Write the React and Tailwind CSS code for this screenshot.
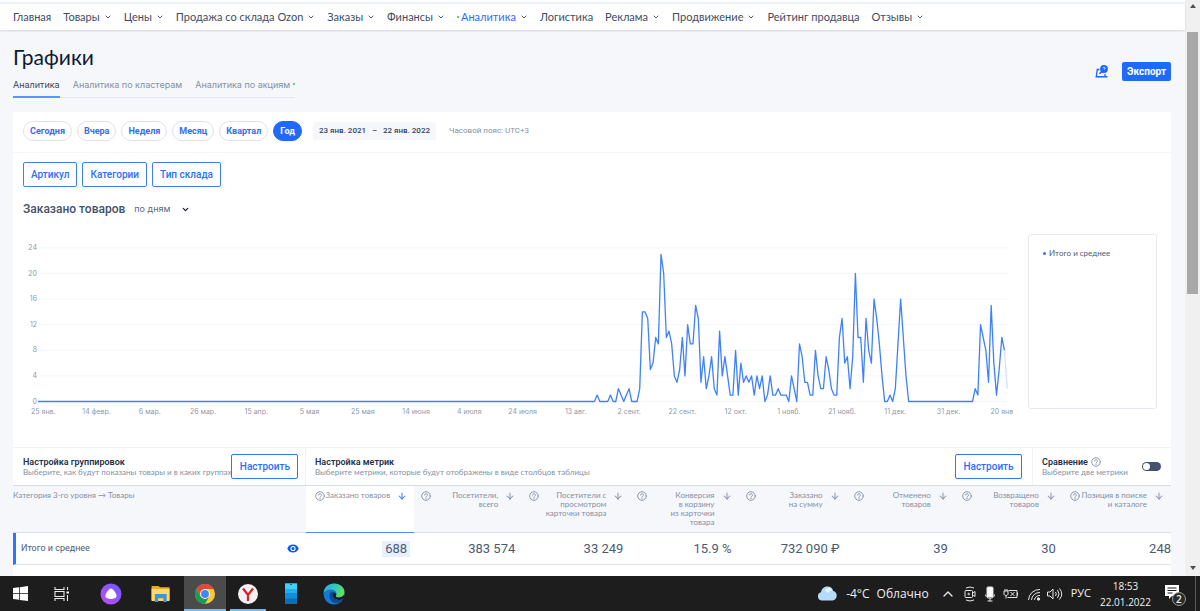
import React from 'react';
import clsx from 'clsx';
import { ArrowDown, ChevronDown, ChevronUp } from 'lucide-react';

const navItems = [
  { label: 'Главная' },
  { label: 'Товары', menu: true },
  { label: 'Цены', menu: true },
  { label: 'Продажа со склада Ozon', menu: true },
  { label: 'Заказы', menu: true },
  { label: 'Финансы', menu: true },
  { label: 'Аналитика', menu: true, active: true },
  { label: 'Логистика' },
  { label: 'Реклама', menu: true },
  { label: 'Продвижение', menu: true },
  { label: 'Рейтинг продавца' },
  { label: 'Отзывы', menu: true },
];

const periods = ['Сегодня', 'Вчера', 'Неделя', 'Месяц', 'Квартал', 'Год'];
const filters = ['Артикул', 'Категории', 'Тип склада'];

const metrics = [
  { lines: ['Заказано товаров'], value: '688', sorted: true },
  { lines: ['Посетители,', 'всего'], value: '383 574' },
  { lines: ['Посетители с', 'просмотром', 'карточки товара'], value: '33 249' },
  { lines: ['Конверсия', 'в корзину', 'из карточки', 'товара'], value: '15.9 %' },
  { lines: ['Заказано', 'на сумму'], value: '732 090 ₽' },
  { lines: ['Отменено', 'товаров'], value: '39' },
  { lines: ['Возвращено', 'товаров'], value: '30' },
  { lines: ['Позиция в поиске', 'и каталоге'], value: '248' },
];

// Orders per day, 23 Jan 2021 - 22 Jan 2022
const orders = [
  ...Array(209).fill(0),
  0, 1, 0, 0, 0, 0, 1, 0, 0, 2, 1, 0, 1, 2, 0, 0, 0, 2, 14, 14, 13, 5, 6, 10, 9, 23, 20, 10, 11, 9,
  4, 3, 5, 10, 4, 12, 9, 9, 15, 13, 3, 7, 2, 4, 7, 2, 1, 11, 4, 7, 4, 1, 1, 8, 1, 6, 3, 4, 3, 4,
  1, 4, 2, 4, 0, 1, 4, 1, 1, 2, 1, 1, 1, 0, 4, 2, 0, 9, 7, 3, 3, 1, 1, 8, 4, 2, 2, 7, 5, 2,
  1, 1, 10, 13, 6, 7, 2, 7, 20, 10, 10, 3, 13, 8, 6, 16, 13, 9, 4, 0, 0, 1, 0, 2, 9, 16, 10, 4,
  ...Array(25).fill(0),
  2, 1, 12, 10, 8, 3, 15, 6, 1, 5, 10, 8, 2,
];

const dateTicks = [
  '25 янв.', '14 февр.', '6 мар.', '26 мар.', '15 апр.', '5 мая', '25 мая', '14 июня', '4 июля', '24 июля',
  '13 авг.', '2 сент.', '22 сент.', '12 окт.', '1 нояб.', '21 нояб.', '11 дек.', '31 дек.', '20 янв',
];

const chartX = (day) => 15 + day * 2.6625;
const chartY = (value) => 167.5 - value * 6.4;
const toPoints = (from, to) =>
  orders.slice(from, to).map((v, i) => `${chartX(from + i)},${chartY(v)}`).join(' ');

const HelpIcon = ({ className }) => (
  <svg viewBox="0 0 20 20" className={clsx('h-[10px] w-[10px] shrink-0', className)} fill="none" stroke="currentColor" strokeWidth="2" strokeLinecap="round">
    <circle cx="10" cy="10" r="8.6" />
    <path d="M7.2 8.2a2.8 2.8 0 1 1 4.2 2.4c-1 .6-1.4 1-1.4 1.9" />
    <path d="M10 15v.1" strokeWidth="2.4" />
  </svg>
);

const EyeIcon = () => (
  <svg viewBox="0 0 24 18" className="h-[9px] w-[12px]">
    <path d="M12 1C6.5 1 2.4 4.200 .8 9c1.600 4.800 5.700 8 11.200 8s9.600-3.200 11.200-8C21.600 4.200 17.500 1 12 1z" fill="#005bff" />
    <circle cx="12" cy="9" r="5.200" fill="#fff" />
    <circle cx="12" cy="9" r="3" fill="#005bff" />
  </svg>
);

const NavBar = () => (
  <nav className="relative flex h-[26px] items-center gap-[12px] bg-white pl-[13px] font-[Lato,Inter,sans-serif] text-[11px] text-[#3d4d63] shadow-[0_1px_2px_rgba(0,20,60,0.15)]">
    {navItems.map((item) => (
      <a key={item.label} href="#" className={clsx('flex items-center whitespace-nowrap', item.active && 'text-[#2f6bff]')}>
        {item.active && <span className="mr-[2px] h-[2px] w-[2px] rounded-full bg-[#2fbf50]" />}
        {item.label}
        {item.menu && <ChevronDown className="ml-[4px] h-[8px] w-[8px] text-[#4d5c73]" strokeWidth={3} />}
      </a>
    ))}
  </nav>
);

const PageHeader = () => (
  <header className="flex items-start justify-between pt-[14px]">
    <div>
      <h1 className="font-[Lato,Inter,sans-serif] text-[21px] leading-[26px] text-[#0d1a33]">Графики</h1>
      <div className="mt-[8px] flex gap-[13px] border-b border-[#e3e7f3] font-[Inter,sans-serif] text-[9px] leading-[14px] text-[#8590a3]">
        <a href="#" className="-mb-px border-b-2 border-[#5b93ff] pb-[4px] text-[#3a475c]">Аналитика</a>
        <a href="#">Аналитика по кластерам</a>
        <a href="#" className="flex">
          Аналитика по акциям
          <span className="mt-[5px] ml-[3px] h-[2px] w-[2px] rounded-full bg-[#2fbf50]" />
        </a>
      </div>
    </div>
    <div className="mt-[18px] flex items-center gap-[14px]">
      <button type="button" aria-label="Помощь">
        <svg viewBox="0 0 26 26" className="h-[13px] w-[13px]">
          <path d="M9 9H4.500L3 20M1 23.500h24M20 18v5M3 20v3" fill="none" stroke="#1a66ff" strokeWidth="2.600" />
          <path d="M9 18c1-3 3-4 6-4" fill="none" stroke="#1a66ff" strokeWidth="2.600" />
          <circle cx="18" cy="8" r="7.800" fill="#1a66ff" />
          <path d="M16 6.500c0-3 4.500-2.500 4.200 0-.1 1.500-2 1.600-2 3.300" fill="none" stroke="#fff" strokeWidth="1.600" />
        </svg>
      </button>
      <button type="button" className="h-[19px] w-[49px] rounded-[2px] bg-[#1f69ff] text-[10px] leading-none font-bold text-white">Экспорт</button>
    </div>
  </header>
);

const PeriodBar = () => (
  <div className="flex h-[41px] items-center border-b border-[#f3f5fa] pb-[2px] pl-[10px]">
    <div className="flex gap-[5px]">
      {periods.map((p) => (
        <button
          key={p}
          type="button"
          className={clsx(
            'h-[20px] rounded-full border px-[6px] text-[9px] leading-none font-bold',
            p === 'Год' ? 'border-[#1f69ff] bg-[#1f69ff] text-white' : 'border-[#dfe2ec] bg-white text-[#2f6dff]'
          )}
        >
          {p}
        </button>
      ))}
    </div>
    <div className="ml-[11px] flex h-[18px] w-[123px] items-center justify-between rounded-[2px] bg-[#f5f7fb] px-[6px] text-[8px] font-medium text-[#36455c]">
      <input aria-label="Начало периода" className="w-[50px] bg-transparent" defaultValue="23 янв. 2021" />
      <span>–</span>
      <input aria-label="Конец периода" className="w-[50px] bg-transparent text-right" defaultValue="22 янв. 2022" />
    </div>
    <span className="ml-[13px] text-[8px] text-[#8590a3]">Часовой пояс: UTC+3</span>
  </div>
);

const Chart = () => (
  <svg viewBox="0 0 986 186" className="min-w-0 flex-1 overflow-visible font-[Inter,sans-serif]" role="img" aria-label="Заказано товаров по дням">
    {[0, 4, 8, 12, 16, 20, 24].map((v) => (
      <g key={v}>
        <line x1="15" x2="985" y1={chartY(v)} y2={chartY(v)} stroke="#f6f7fa" />
        <text x="14" y={chartY(v) + 2} textAnchor="end" fontSize="7" fill="#8e99ab">{v}</text>
      </g>
    ))}
    {dateTicks.map((label, i) => (
      <text key={label} x={chartX(2 + i * 20)} y="180" textAnchor="middle" fontSize="7" fill="#8e99ab">{label}</text>
    ))}
    <polyline points={toPoints(0, 364)} fill="none" stroke="#3f80ff" strokeWidth="1.300" strokeLinejoin="round" />
    <polyline points={toPoints(363, 365)} fill="none" stroke="#cfe0ff" strokeWidth="1.200" />
  </svg>
);

const ConfigureButton = () => (
  <button type="button" className="h-[25px] w-[67px] shrink-0 rounded-[2px] border border-[#2f74ff] font-[Roboto,sans-serif] text-[10px] font-medium text-[#2f6dff]">
    Настроить
  </button>
);

const SettingsBar = () => (
  <div className="flex h-[38px] border-t border-[#f0f2f7] font-[Lato,sans-serif] text-[8px] leading-[10px] text-[#8590a3]">
    <div className="flex w-[293px] items-center justify-between border-r border-[#f0f2f7] pr-[9px] pl-[10px]">
      <div className="whitespace-nowrap">
        <p className="font-[Roboto,sans-serif] text-[9px] font-semibold text-[#24334a]">Настройка группировок</p>
        <p>Выберите, как будут показаны товары и в каких группах</p>
      </div>
      <ConfigureButton />
    </div>
    <div className="flex flex-1 items-center justify-between pr-[10px] pl-[9px]">
      <div>
        <p className="font-[Roboto,sans-serif] text-[9px] font-semibold text-[#24334a]">Настройка метрик</p>
        <p>Выберите метрики, которые будут отображены в виде столбцов таблицы</p>
      </div>
      <ConfigureButton />
    </div>
    <label className="flex w-[139px] items-center justify-between border-l border-[#f0f2f7] pr-[10px] pl-[9px]">
      <span>
        <span className="flex items-center gap-[3px] font-[Roboto,sans-serif] text-[9px] font-semibold text-[#24334a]">
          Сравнение
          <HelpIcon className="text-[#8d98ab]" />
        </span>
        <span className="block">Выберите две метрики</span>
      </span>
      <input
        type="checkbox"
        className="flex h-[9px] w-[19px] appearance-none items-center rounded-full bg-[#44536d] pl-px before:h-[7px] before:w-[7px] before:rounded-full before:bg-white checked:justify-end"
      />
    </label>
  </div>
);

const MetricsTable = () => (
  <table className="w-full table-fixed border-separate border-spacing-0 border-t border-[#d5dce6]">
    <colgroup>
      <col className="w-[293px]" />
      {metrics.map((m) => <col key={m.lines.join(' ')} />)}
    </colgroup>
    <thead>
      <tr className="h-[47px] bg-[#f5f7fb] font-[Lato,sans-serif] text-[8px] leading-[9px] text-[#8590a3]">
        <th className="border-b border-[#d9dfe9] pt-[5px] text-left align-top font-normal">Категория 3-го уровня → Товары</th>
        {metrics.map((m) => (
          <th
            key={m.lines.join(' ')}
            className={clsx('border-b pt-[5px] align-top font-normal', m.sorted ? 'border-[#4d88ff] bg-white pl-[9px]' : 'border-[#d9dfe9] pl-[7px]')}
          >
            <div className="flex items-start pr-[7px]">
              <HelpIcon className="text-[#8d98ab]" />
              <span className="flex-1 text-right whitespace-nowrap">
                {m.lines.map((line) => <span key={line} className="block">{line}</span>)}
              </span>
              <ArrowDown className={clsx('ml-[7px] h-[10px] w-[10px] shrink-0', m.sorted ? 'text-[#3f80ff]' : 'text-[#8d98ab]')} strokeWidth={2.5} />
            </div>
          </th>
        ))}
      </tr>
    </thead>
    <tbody>
      <tr className="h-[32px] text-[13px] text-[#4c5b73]">
        <td className="border-b border-l-[3px] border-b-[#dfe4ec] border-l-[#2f74ff] pr-[7px] pl-[5px]">
          <div className="flex items-center justify-between text-[9px]">
            Итого и среднее
            <button type="button" aria-label="Показать на графике"><EyeIcon /></button>
          </div>
        </td>
        {metrics.map((m) => (
          <td key={m.lines.join(' ')} className="border-b border-[#dfe4ec] pr-[7px] text-right leading-[16px] whitespace-nowrap last:pr-0">
            <span className={clsx(m.sorted && 'inline-block bg-[#e8effd] px-[3px] -mr-[3px]')}>{m.value}</span>
          </td>
        ))}
      </tr>
    </tbody>
  </table>
);

const ScrollBar = () => (
  <div aria-hidden="true" className="flex w-[15px] shrink-0 flex-col items-center bg-[#f0f0f0]">
    <div className="flex h-[32px] pt-[4px]">
      <svg viewBox="0 0 6 4" className="h-[4px] w-[6px]"><path d="M0 4l3-4 3 4z" fill="#505050" /></svg>
    </div>
    <div className="h-[262px] w-[11px] bg-[#a8a8a8]" />
    <div className="mt-auto pb-[6px]">
      <svg viewBox="0 0 6 4" className="h-[4px] w-[6px]"><path d="M0 0l3 4 3-4z" fill="#505050" /></svg>
    </div>
  </div>
);

const WindowsIcon = () => (
  <svg viewBox="0 0 16 16" className="h-[15px] w-[15px]" fill="#fff">
    <path d="M0 2.200L6.600 1.300V7.600H0zM7.400 1.200L16 0V7.600H7.400zM0 8.400H6.600V14.700L0 13.800zM7.400 8.400H16V16L7.400 14.800z" />
  </svg>
);

const TaskViewIcon = () => (
  <svg viewBox="0 0 16 14" className="h-[14px] w-[16px]" fill="none" stroke="#e8e8e8" strokeWidth="1.100">
    <path d="M1 0v2.500h9V0M1 14v-2.500h9V14M1 4.500h9v5H1zM13.500 0v3M13.500 8v6" />
    <path d="M12.500 4.500h2.500v2h-2.500z" fill="#fff" stroke="none" />
  </svg>
);

const AliceIcon = () => (
  <svg viewBox="0 0 22 22" className="h-[22px] w-[22px]">
    <defs>
      <linearGradient id="alice" x1="1" y1="0" x2="0" y2="1">
        <stop offset="0" stopColor="#6a5cff" />
        <stop offset="1" stopColor="#c44bf0" />
      </linearGradient>
    </defs>
    <circle cx="11" cy="11" r="10.500" fill="url(#alice)" />
    <path d="M11 5.500c-2.300 0-6 6-5.600 8 .4 3.300 10.800 3.300 11.200 0 .4-2-3.300-8-5.600-8z" fill="#fff" />
  </svg>
);

const FolderIcon = () => (
  <svg viewBox="0 0 20 18" className="h-[17px] w-[20px]">
    <path d="M0 1h7.500l1.500 1.500H19V16H0z" fill="#e9a820" />
    <path d="M0 4h19v13H0z" fill="#ffd868" />
    <path d="M3.500 9.500h12.500V18h-3.500v-4h-5.500v4H3.500z" fill="#3d96dd" />
  </svg>
);

const ChromeIcon = () => (
  <svg viewBox="0 0 20 20" className="h-[20px] w-[20px]">
    <circle cx="10" cy="10" r="10" fill="#fcc934" />
    <path d="M1.300 5A10 10 0 0 1 18.700 5H10L5.700 12.500z" fill="#dd4b3e" />
    <path d="M1.300 5A10 10 0 0 0 10 20l4.300-7.500L10 14l-4.300-1.500z" fill="#1f9a55" />
    <circle cx="10" cy="10" r="4.900" fill="#f4f7fb" />
    <circle cx="10" cy="10" r="3.900" fill="#4285f4" />
  </svg>
);

const YandexIcon = () => (
  <svg viewBox="0 0 20 20" className="h-[20px] w-[20px]">
    <circle cx="10" cy="10" r="10" fill="#f1f1f1" />
    <path d="M5 4.500l5 6.500 5-6.500M10 10.500V17" fill="none" stroke="#d9202a" strokeWidth="2.200" />
  </svg>
);

const PhoneIcon = () => (
  <svg viewBox="0 0 12 21" className="h-[21px] w-[12px]">
    <rect width="12" height="21" rx="0.500" fill="#0a6fb8" />
    <path d="M0 .5h12V6H0z" fill="#3fd0f8" />
    <path d="M0 6h12v4.500H0z" fill="#22b0ec" />
    <path d="M0 10.500h12v5H0z" fill="#1090d8" />
    <path d="M5 1.500h2" stroke="#0d5d88" />
  </svg>
);

const EdgeIcon = () => (
  <svg viewBox="0 0 22 22" className="h-[22px] w-[22px]">
    <defs>
      <linearGradient id="edgeTop" x1="0" y1="0" x2="1" y2="0.300">
        <stop offset="0" stopColor="#2aa5e4" />
        <stop offset="0.600" stopColor="#38c9b8" />
        <stop offset="1" stopColor="#63dd58" />
      </linearGradient>
    </defs>
    <circle cx="11" cy="11" r="10.500" fill="#1479cf" />
    <path d="M.6 10C1.200 4 5.500.5 11 .5c6 0 10.500 4 10.500 8.500 0 3.500-2.800 5.500-6 5.500-2.500 0-3.300-1-2.500-2.200C14.500 9.500 12 6.500 8 6.500c-4 0-6.600 2-7.400 3.500z" fill="url(#edgeTop)" />
    <path d="M8 9c-3 3-1.500 9 3 11 3.500.6 7-.5 9-4-4 2-9.500 1-10-3-.1-1.500.5-2.500 1.200-3C10.500 8.500 9 8.500 8 9z" fill="#0d4a93" />
    <path d="M10 12.500c-.2-1.500.5-2.500 1.500-3 1.800.5 2.200 1.700 1.500 2.800-.8 1.200 0 2.200 2.500 2.200 2.200 0 4-.8 5.200-2.200L22 14l-2 2c-4 1.800-9.500 1-10-3.500z" fill="#1d1d1d" />
  </svg>
);

const TrayIcons = () => (
  <div className="flex items-center text-[#e6e6e6]">
    <button type="button" aria-label="Скрытые значки" className="w-[22px]"><ChevronUp className="mx-auto h-[16px] w-[16px]" strokeWidth={2} /></button>
    <svg viewBox="0 0 22 16" className="h-[16px] w-[22px]" fill="none" stroke="currentColor">
      <rect x="6" y="4.500" width="7.500" height="7" rx="1" />
      <path d="M13.500 7l2.500-1.500v5L13.500 9M7 2q4-2 8 0M7 14q4 2 8 0" />
      <circle cx="9.700" cy="8" r="0.800" />
    </svg>
    <svg viewBox="0 0 18 16" className="h-[16px] w-[18px]" fill="none" stroke="currentColor">
      <rect x="6" y="1" width="6" height="10" rx="1" fill="#fff" />
      <path d="M4.500 8.500c0 5 9 5 9 0M9 12.500V15M6.500 15h5" />
    </svg>
    <svg viewBox="0 0 24 14" className="h-[14px] w-[24px]" fill="none" stroke="currentColor">
      <path d="M9.500 3.500H18v7H8.500M18.500 5.500v3M11.500 5l4 4M15.500 5l-4 4M5 4h4v3c0 2-4 2-4 0zM6 2v2M8 2v2M7 8.500v3" />
    </svg>
    <svg viewBox="0 0 22 16" className="h-[16px] w-[22px]" fill="none" stroke="currentColor">
      <path d="M5.500 14A11 11 0 0 1 17 3.500M8.500 14A8 8 0 0 1 17 6.500M11.500 14A5 5 0 0 1 17 9.500" />
      <circle cx="15.500" cy="13" r="1.200" fill="currentColor" />
    </svg>
    <svg viewBox="0 0 20 16" className="h-[16px] w-[20px]" fill="none" stroke="currentColor">
      <path d="M2.500 6h2.500l3-3v10l-3-3h-2.500zM10.500 6q1.500 2 0 4M12.500 4q3 4 0 8M14.500 2.500q4.500 5.500 0 11" />
    </svg>
  </div>
);

const taskbarApps = [
  { name: 'Пуск', icon: <WindowsIcon />, className: 'w-[40px]' },
  { name: 'Представление задач', icon: <TaskViewIcon />, className: 'w-[44px]' },
  { name: 'Алиса', icon: <AliceIcon />, className: 'w-[54px]' },
  { name: 'Проводник', icon: <FolderIcon />, className: 'w-[46px]' },
  { name: 'Chrome', icon: <ChromeIcon />, className: 'w-[42px] border-b-2 border-[#76b9ed] bg-[#4b4b4b] pt-[2px]' },
  { name: 'Яндекс', icon: <YandexIcon />, className: 'mx-[4px] w-[36px] border-b-2 border-[#76b9ed] pt-[2px]' },
  { name: 'Телефон', icon: <PhoneIcon />, className: 'w-[42px]' },
  { name: 'Edge', icon: <EdgeIcon />, className: 'w-[44px]' },
];

const TaskBar = () => (
  <footer className="flex h-[35px] shrink-0 bg-[#1d1d1d] font-['Open_Sans',sans-serif] text-[12px] text-[#f0f0f0]">
    {taskbarApps.map((app) => (
      <button key={app.name} type="button" aria-label={app.name} className={clsx('flex items-center justify-center', app.className)}>
        {app.icon}
      </button>
    ))}
    <div className="ml-auto flex items-center whitespace-nowrap">
      <svg viewBox="0 0 20 15" className="mr-[9px] h-[15px] w-[20px]">
        <path d="M4.500 14.500a4.200 4.200 0 0 1-.5-8.200C4.500 2.500 7.500.5 10.500.5c3.200 0 5.200 2 5.700 4.500 2.300.5 3.500 2.400 3.500 4.500 0 2.800-2 5-4.700 5z" fill="#b4dcf8" />
        <path d="M8 5C9 1.500 14 .5 15.500 4.500 13 4 12 5.500 11.500 7z" fill="#e6f4ff" />
      </svg>
      <span className="mr-[7px]">-4°C</span>
      <span className="mr-[8px]">Облачно</span>
      <TrayIcons />
      <span className="ml-[6px] text-[11px]">РУС</span>
      <div className="mr-[9px] ml-[9px] text-center text-[10px] leading-[16px]">
        <p>18:53</p>
        <p>22.01.2022</p>
      </div>
      <button type="button" aria-label="Уведомления" className="relative ml-[4px] h-[24px] w-[24px]">
        <svg viewBox="0 0 24 24" className="h-[24px] w-[24px]">
          <path d="M1 3h14v11H8l-3 3v-3H1z" fill="#fff" />
          <path d="M3.500 6h9M3.500 8.500h9M3.500 11h5" stroke="#1d1d1d" />
          <circle cx="15" cy="17" r="6.500" fill="#2b2b2b" stroke="#9a9a9a" />
        </svg>
        <span className="absolute top-[11px] left-[12px] text-[10px] leading-[12px] font-semibold">2</span>
      </button>
      <span className="ml-[7px] h-[35px] w-[5px] border-l border-[#5a5a5a]" />
    </div>
  </footer>
);

const App = () => (
  <div className="flex min-h-screen flex-col bg-[#f5f7fb] font-[Roboto,sans-serif]">
    <div className="flex flex-1">
      <div className="flex min-w-0 flex-1 flex-col">
        <div className="h-[4px] border-b-2 border-[#eff1f8] bg-white" />
        <NavBar />
        <main className="flex flex-1 flex-col pr-[14px] pl-[13px]">
          <PageHeader />
          <section className="mt-[14px] flex-1 rounded-t-[2px] bg-white">
            <PeriodBar />
            <div className="flex gap-[5px] pt-[9px] pl-[10px]">
              {filters.map((f) => (
                <button key={f} type="button" className="h-[25px] rounded-[2px] border border-[#3f80ff] px-[7px] text-[10px] font-medium text-[#2f6dff]">
                  {f}
                </button>
              ))}
            </div>
            <div className="mt-[13px] flex h-[18px] items-center pl-[10px]">
              <h2 className="text-[12px] font-medium text-[#42526a]">Заказано товаров</h2>
              <label className="ml-[9px] flex items-center">
                <select aria-label="Группировка" className="w-[47px] appearance-none font-[Inter,sans-serif] text-[9px] text-[#5c6a80]">
                  <option>по дням</option>
                  <option>по неделям</option>
                </select>
                <ChevronDown className="h-[9px] w-[9px] text-[#1b2536]" strokeWidth={3.500} />
              </label>
            </div>
            <div className="mt-[16px] flex items-start gap-[19px] pr-[14px] pl-[10px]">
              <Chart />
              <aside className="h-[175px] w-[129px] shrink-0 rounded-[3px] border border-[#e6e8f1] px-[14px] pt-[12px]">
                <p className="flex items-center gap-[3px] font-[Lato,sans-serif] text-[8px] leading-[12px] text-[#4c5b73]">
                  <span className="h-[3px] w-[3px] rounded-full bg-[#2f74ff]" />
                  Итого и среднее
                </p>
              </aside>
            </div>
            <div className="mt-[27px]">
              <SettingsBar />
              <MetricsTable />
            </div>
          </section>
        </main>
      </div>
      <ScrollBar />
    </div>
    <TaskBar />
  </div>
);

export default App;
